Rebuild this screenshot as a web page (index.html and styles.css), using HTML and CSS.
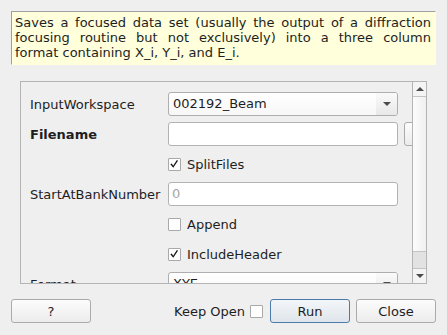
FILE: index.html
```html
<!DOCTYPE html>
<html lang="en">
<head>
    <meta charset="UTF-8">
    <title>SaveFocusedXYE input dialog</title>
    <link rel="stylesheet" href="styles.css">
</head>
<body>
    <div class="dialog">
        <!-- algorithm summary -->
        <p class="summary">Saves a focused data set (usually the output of a diffraction focusing routine but not exclusively) into a three column format containing X_i, Y_i, and E_i.</p>

        <!-- property list -->
        <div class="props">
            <div class="props-view">
                <div class="row">
                    <span class="row-label">InputWorkspace</span>
                    <div class="combo field">
                        <span class="combo-value">002192_Beam</span>
                        <span class="combo-arrow"><i class="tri-down"></i></span>
                    </div>
                </div>
                <div class="row">
                    <span class="row-label required">Filename</span>
                    <div class="input field"></div>
                    <button class="btn browse"></button>
                </div>
                <div class="row">
                    <span class="row-label"></span>
                    <label class="checkrow">
                        <span class="check checked"><svg viewBox="0 0 13 13" width="11" height="11"><path d="M1.6 6.2 L3.2 5.4 L4.9 8.1 L9.3 1.2 L10.6 2.1 L5 10.4 Z" fill="#111"/></svg></span>
                        SplitFiles
                    </label>
                </div>
                <div class="row">
                    <span class="row-label">StartAtBankNumber</span>
                    <div class="input field"><span class="placeholder">0</span></div>
                </div>
                <div class="row">
                    <span class="row-label"></span>
                    <label class="checkrow">
                        <span class="check"></span>
                        Append
                    </label>
                </div>
                <div class="row">
                    <span class="row-label"></span>
                    <label class="checkrow">
                        <span class="check checked"><svg viewBox="0 0 13 13" width="11" height="11"><path d="M1.6 6.2 L3.2 5.4 L4.9 8.1 L9.3 1.2 L10.6 2.1 L5 10.4 Z" fill="#111"/></svg></span>
                        IncludeHeader
                    </label>
                </div>
                <div class="row">
                    <span class="row-label">Format</span>
                    <div class="combo field">
                        <span class="combo-value">XYE</span>
                        <span class="combo-arrow"><i class="tri-down"></i></span>
                    </div>
                </div>
            </div>
            <div class="vscroll">
                <span class="sb-btn sb-up"><i class="tri-up"></i></span>
                <span class="sb-handle"></span>
                <span class="sb-groove"></span>
                <span class="sb-btn sb-down"><i class="tri-down"></i></span>
            </div>
        </div>

        <!-- dialog buttons -->
        <div class="actions">
            <button class="btn">?</button>
            <span class="spacer"></span>
            <label class="keep-open">Keep Open <span class="check"></span></label>
            <button class="btn btn-default">Run</button>
            <button class="btn">Close</button>
        </div>
    </div>
</body>
</html>
```

FILE: styles.css
```css
/* base */
* {
    margin: 0;
    padding: 0;
    box-sizing: border-box;
}

body {
    font-family: "DejaVu Sans", "Liberation Sans", sans-serif;
    font-size: 13px;
    color: #1e1e1e;
    background: #efefef;
    overflow: hidden;
}

.dialog {
    width: 447px;
    height: 335px;
    padding: 11px;
}

/* summary text */
.summary {
    background: #ffffdc;
    border: 1px solid;
    border-color: #a0a0a0 #ffffdc #ffffdc #a0a0a0;
    padding: 3px 4px 4px 3px;
    line-height: 15px;
    text-align: justify;
}

/* property area */
.props {
    display: flex;
    height: 203px;
    margin: 16px 9px 0 9px;
    border: 1px solid #b4b4b4;
}

.props-view {
    flex: 1;
    overflow: hidden;
    padding: 10px 0 0 9px;
    display: flex;
    flex-direction: column;
    gap: 6px;
}

.row {
    display: flex;
    align-items: center;
    height: 24px;
    flex: none;
}

.row-label {
    width: 138px;
    flex: none;
    white-space: nowrap;
}

.row-label.required {
    font-weight: bold;
}

.field {
    width: 230px;
    height: 24px;
    flex: none;
}

.input {
    background: #fff;
    border: 1px solid #b2b2b2;
    border-radius: 3px;
    padding: 0 3px;
    line-height: 22px;
}

.placeholder {
    color: #a6a6a6;
}

.combo {
    display: flex;
    border: 1px solid #aeaeae;
    border-radius: 3px;
    background: linear-gradient(#ffffff, #f7f7f7);
}

.combo-value {
    flex: 1;
    padding-left: 4px;
    line-height: 22px;
}

.combo-arrow {
    width: 21px;
    display: flex;
    align-items: center;
    justify-content: center;
    background: linear-gradient(#fafafa, #e8e8e8);
    border-radius: 0 2px 2px 0;
}

.tri-down {
    width: 0;
    height: 0;
    border-left: 4px solid transparent;
    border-right: 4px solid transparent;
    border-top: 4px solid #4c4c4c;
}

.tri-up {
    width: 0;
    height: 0;
    border-left: 4px solid transparent;
    border-right: 4px solid transparent;
    border-bottom: 4px solid #4c4c4c;
}

.checkrow {
    display: flex;
    align-items: center;
    gap: 6px;
    white-space: nowrap;
}

.check {
    width: 13px;
    height: 13px;
    flex: none;
    display: flex;
    align-items: center;
    justify-content: center;
    background: #fff;
    border: 1px solid #a9a9a9;
    border-radius: 1px;
}

/* scrollbar */
.vscroll {
    width: 14px;
    flex: none;
    display: flex;
    flex-direction: column;
    border-left: 1px solid #b4b4b4;
}

.sb-btn {
    height: 15px;
    flex: none;
    display: flex;
    align-items: center;
    justify-content: center;
    background: #f4f4f4;
}

.sb-up {
    border-bottom: 1px solid #c4c4c4;
}

.sb-down {
    border-top: 1px solid #c4c4c4;
}

.sb-handle {
    height: 155px;
    flex: none;
    background: linear-gradient(to right, #fcfcfc, #f0f0f0);
    border-bottom: 1px solid #c4c4c4;
}

.sb-groove {
    flex: 1;
    background: #e2e2e2;
}

/* buttons */
.btn {
    width: 80px;
    height: 24px;
    flex: none;
    font: inherit;
    color: inherit;
    border: 1px solid #ababab;
    border-radius: 3px;
    background: linear-gradient(#fcfcfc, #ececec);
}

.btn-default {
    border-color: #4a7bab;
    background: linear-gradient(#f3f6f9, #dfe5eb);
}

.browse {
    margin-left: 6px;
    height: 24px;
}

.actions {
    display: flex;
    align-items: center;
    gap: 6px;
    margin-top: 15px;
}

.spacer {
    flex: 1;
}

.keep-open {
    display: flex;
    align-items: center;
    gap: 5px;
    margin-right: 1px;
    white-space: nowrap;
}
```
